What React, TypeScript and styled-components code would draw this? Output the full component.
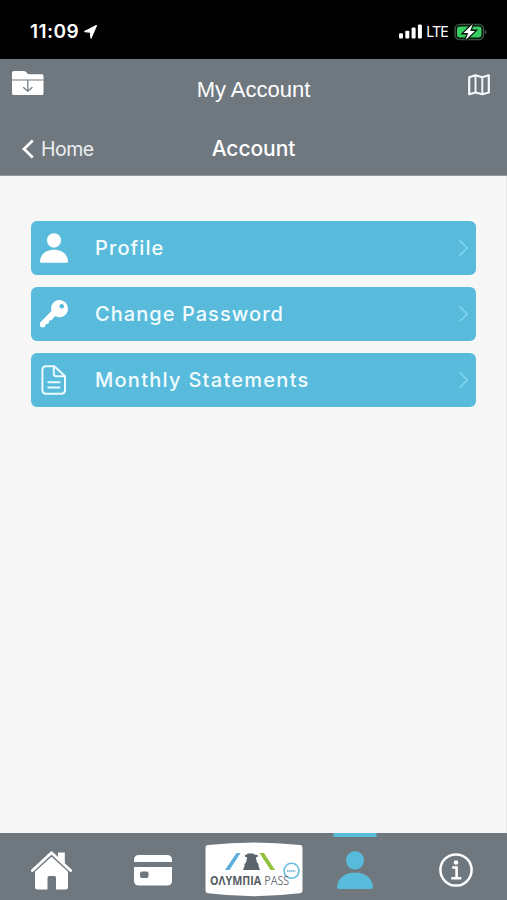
import React from 'react';
import styled, { createGlobalStyle } from 'styled-components';

const Global = createGlobalStyle`
  * { box-sizing: border-box; }
  body { margin: 0; background: #f7f7f7; }
  svg { display: block; flex: none; }
  button { border: 0; background: none; padding: 0; font: inherit; color: inherit; }
`;

const Screen = styled.div`
  width: 507px;
  height: 900px;
  display: flex;
  flex-direction: column;
  overflow: hidden;
  background: #f7f7f7;
  color: #fff;
  font-family: Inter, 'Liberation Sans', sans-serif;
`;

const StatusBar = styled.div`
  height: 59px;
  flex: none;
  display: flex;
  align-items: center;
  padding: 4px 19px 0 30px;
  background: #000;
`;

const Clock = styled.span`
  font-size: 19px;
  line-height: 24px;
  font-weight: 600;
  letter-spacing: 0.45px;
  margin-right: 5px;
`;

const Network = styled.span`
  font-size: 14.2px;
  line-height: 20px;
  letter-spacing: -0.9px;
  margin: 1px 6px 0 4px;
`;

const Spacer = styled.div`
  flex: 1;
`;

const Header = styled.header`
  height: 117px;
  flex: none;
  background: #70787f;
  border-bottom: 1px solid #91979b;
`;

const Bar = styled.div<{ $height: number; $padding: string }>`
  height: ${(p) => p.$height}px;
  padding: ${(p) => p.$padding};
  display: grid;
  grid-template-columns: 1fr auto 1fr;
  align-items: start;
`;

const AppTitle = styled.div`
  font-family: 'Liberation Sans', Arial, sans-serif;
  font-size: 22px;
  line-height: 28px;
  padding: 5px 0 0 5px;
`;

const PageTitle = styled.div`
  font-size: 21px;
  line-height: 28px;
  font-weight: 500;
  letter-spacing: -0.05px;
`;

const BackButton = styled.button`
  justify-self: start;
  display: flex;
  align-items: center;
  gap: 7px;
  font-size: 19.5px;
  line-height: 28px;
  color: #eceff1;
  letter-spacing: -0.5px;
`;

const MapButton = styled.button`
  justify-self: end;
  padding-top: 3px;
`;

const Menu = styled.main`
  flex: 1;
  display: flex;
  flex-direction: column;
  gap: 12px;
  padding: 45px 30px 0 31px;
  border-right: 1px solid #e9e9ea;
`;

const MenuItem = styled.button`
  height: 54px;
  flex: none;
  display: flex;
  align-items: center;
  padding: 0 7px 0 8px;
  border-radius: 6px;
  background: #59bbdb;
  text-align: left;
`;

const MenuIcon = styled.span`
  width: 30px;
  margin-right: 26px;
  display: flex;
  justify-content: center;
`;

const MenuLabel = styled.span<{ $spacing: number }>`
  flex: 1;
  font-size: 20px;
  line-height: 28px;
  font-weight: 500;
  letter-spacing: ${(p) => p.$spacing}px;
  color: #f2fcff;
`;

const TabBar = styled.nav`
  height: 67px;
  flex: none;
  display: grid;
  grid-template-columns: repeat(5, 1fr);
  background: #70787f;
`;

const Tab = styled.button<{ $active?: boolean }>`
  display: flex;
  justify-content: center;
  align-items: flex-start;
  position: relative;
  color: ${(p) => (p.$active ? '#59bbdb' : '#fff')};

  &::before {
    content: '';
    display: ${(p) => (p.$active ? 'block' : 'none')};
    position: absolute;
    top: 0;
    left: 50%;
    width: 43px;
    height: 4px;
    transform: translateX(-50%);
    background: #59bbdb;
  }
`;

const TabIcon = styled.span<{ $top: number; $left?: number }>`
  margin-top: ${(p) => p.$top}px;
  padding-left: ${(p) => p.$left ?? 0}px;
`;

const PersonIcon = ({ width, height }: { width: number; height: number }) => (
  <svg width={width} height={height} viewBox="0 0 36 38" fill="currentColor">
    <ellipse cx="18" cy="9.3" rx="9" ry="9.3" />
    <path d="M0 36.2C.5 27 8 21.4 18 21.4S35.500 27 36 36.200Q36 38 34.200 38H1.800Q0 38 0 36.200Z" />
  </svg>
);

const KeyIcon = () => (
  <svg width="28" height="28" viewBox="0 0 28 28">
    <path
      fill="#fff"
      fillRule="evenodd"
      d="M19.500 0A8.400 8.400 0 0 0 11.500 11L.6 21.900Q0 22.500 0 23.300V25.200Q0 27.500 2.300 27.500C4 27.500 5.400 26.800 5.500 25.600C5.600 24.300 6 24.100 7.200 24C8.500 23.900 8.900 23.400 9 22.100C9.100 20.900 9.500 20.400 10.800 20.300C12.200 20.200 12.500 19.600 12.700 18.500L15.500 15.900A8.200 8.200 0 0 0 27.900 8.500A8.300 8.300 0 0 0 19.500 0ZM21.700 4A2.300 2.300 0 1 1 21.690 4Z"
    />
  </svg>
);

const DocumentIcon = () => (
  <svg width="26" height="30" viewBox="0 0 26 30" fill="none" stroke="#ecfbff" strokeWidth="2" strokeLinecap="round" strokeLinejoin="round">
    <path d="M5 1.200H12.500Q13.500 1.200 14.200 1.900L23.300 10.500Q24 11.200 24 12.200V25Q24 28.700 20.200 28.700H5Q1.400 28.700 1.400 25V5Q1.400 1.200 5 1.200Z" />
    <path d="M12.800 1.500V8.800Q12.800 11.300 15.300 11.300H23.500M7.300 17.300H18.500M7.300 22.500H18.500" />
  </svg>
);

const ChevronIcon = () => (
  <svg width="11" height="18" viewBox="0 0 11 18" fill="none" stroke="#82d6ef" strokeWidth="1.600">
    <path d="M1.500 1.500L9.300 9L1.500 16.500" />
  </svg>
);

const items = [
  { label: 'Profile', icon: <PersonIcon width={28} height={30} />, spacing: 1.1 },
  { label: 'Change Password', icon: <KeyIcon />, spacing: 1.05 },
  { label: 'Monthly Statements', icon: <DocumentIcon />, spacing: 1.27 },
];

const LocationIcon = () => (
  <svg width="13" height="14" viewBox="0 0 13 14">
    <path d="M12.300.7L.8 6.500L6.500 7L7 13Z" fill="#fff" stroke="#fff" strokeWidth="1.300" strokeLinejoin="round" />
  </svg>
);

const SignalIcon = () => (
  <svg width="23" height="15" viewBox="0 0 23 15" fill="#fff">
    <rect x="0" y="9.300" width="4" height="5.200" rx="1.100" />
    <rect x="6.300" y="6.700" width="4" height="7.800" rx="1.100" />
    <rect x="12.600" y="3.600" width="4" height="10.900" rx="1.100" />
    <rect x="18.900" y="0.500" width="4" height="14" rx="1.100" />
  </svg>
);

const BatteryIcon = () => (
  <svg width="34" height="18" viewBox="0 0 34 18">
    <rect x="1" y="1.500" width="28.500" height="15" rx="4.500" fill="#050805" stroke="#38533f" strokeWidth="1.500" />
    <rect x="3" y="3.500" width="24.500" height="11" rx="2.400" fill="#38cf62" />
    <path d="M31 6.500Q33.600 9 31 11.500Z" fill="#555a56" />
    <path d="M18.800 1L9.500 10.100H14.200L11.500 17L21 7.900H16.200Z" fill="#fff" stroke="#07140a" strokeWidth="2.600" paintOrder="stroke" />
  </svg>
);

const FolderIcon = () => (
  <svg width="32" height="25" viewBox="0 0 32 25">
    <path d="M2 0H12Q13 0 13.800.8L15.200 2.300Q16 3.200 17 3.200H30Q31.500 3.200 31.500 5V22.500Q31.500 24 30 24H1.700Q0 24 0 22.300V2Q0 0 2 0Z" fill="#fff" />
    <path d="M0 9H31.500M15.800 9V20M11.200 16.200L15.800 20.200L20.400 16.200" fill="none" stroke="#70787f" strokeWidth="1.200" />
  </svg>
);

const MapIcon = () => (
  <svg width="22" height="22" viewBox="0 0 22 22" fill="none" stroke="#f5f9fb" strokeWidth="2.200" strokeLinejoin="round">
    <path d="M1.200 3.300L7.500 1.300L14.300 3.300L20.800 1.300V18.500L14.300 20.300L7.500 18.500L1.200 20.300Z" />
    <path d="M7.500 1.300V18.500M14.300 3.300V20.300" strokeWidth="1.900" />
  </svg>
);

const BackIcon = () => (
  <svg width="12" height="20" viewBox="0 0 12 20" fill="none" stroke="#fff" strokeWidth="2.700">
    <path d="M10.700 1.500L2 10L10.700 18.500" />
  </svg>
);

const HomeIcon = () => (
  <svg width="41" height="39" viewBox="0 0 41 39" fill="#fff">
    <path d="M27 1.500H33.800V14L27 8Z" />
    <path d="M4 19.500L20.500 5.200L37 19.500V36Q37 38.500 34.500 38.500H25V26.500Q25 25 23.500 25H18Q16.500 25 16.500 26.500V38.500H6.500Q4 38.500 4 36Z" />
    <path d="M1 20.800L20.500 3L40 20.800" fill="none" stroke="#70787f" strokeWidth="3.800" />
    <path d="M1.400 19.500L20.500 1.700L39.600 19.500" fill="none" stroke="#fff" strokeWidth="2.800" strokeLinejoin="round" strokeLinecap="round" />
  </svg>
);

const CardIcon = () => (
  <svg width="38" height="31" viewBox="0 0 38 31">
    <path d="M0 7V5Q0 0 5 0H33Q38 0 38 5V7Z" fill="#fff" />
    <path d="M0 12H38V25.500Q38 30.500 33 30.500H5Q0 30.500 0 25.500Z" fill="#fff" />
    <rect x="6" y="16.500" width="8.500" height="6.500" rx="2" fill="#70787f" />
  </svg>
);

const LogoIcon = () => (
  <svg width="98" height="55" viewBox="0 0 98 55">
    <path d="M3 3Q49-2 95 3Q97.500 3.200 97.500 6V48Q97.500 51 95 51.300Q49 57 3 51.300Q.5 51 .5 48V6Q.5 3.200 3 3Z" fill="#fff" />
    <path d="M31.500 11H35.500L24.500 28H20Z" fill="#5caeda" />
    <path d="M54.500 11H59L70 28H65.500Z" fill="#91c23d" />
    <path d="M42.500 11.500H48.500L49.500 12.700H52.500L53 14.500L50.800 15.500L52 20.500L53.500 22L53.500 24L55 28H38L39.500 24V22L41 20.500L42.200 15.500L39.700 14.500L40.200 12.700H41.800Z" fill="#5b636b" />
    <circle cx="86.500" cy="28.800" r="7.500" fill="#fff" stroke="#6dbdde" strokeWidth="1.600" />
    <path d="M82 28.900H90.500" stroke="#8fc4e1" strokeWidth="2" strokeDasharray="1.500 .4" />
    <g transform="translate(5 42.600) scale(.88 1)" fontFamily="Open Sans, sans-serif" fontSize="12.200">
      <text x="0" y="0" fontWeight="700" fill="#555c63">ΟΛΥΜΠΙΑ</text>
      <text x="90" y="0" textAnchor="end" fill="#6c7379">PASS</text>
    </g>
  </svg>
);

const InfoIcon = () => (
  <svg width="34" height="34" viewBox="0 0 34 34" fill="none" stroke="#fff">
    <circle cx="17" cy="17" r="15.600" strokeWidth="2.500" />
    <circle cx="17" cy="9.500" r="2.300" fill="#fff" stroke="none" />
    <path d="M13.200 14.500H17.600V25.200M12.300 25.200H22.300" strokeWidth="2.600" />
  </svg>
);

export default function App() {
  return (
    <>
      <Global />
      <Screen>
        <StatusBar>
          <Clock>11:09</Clock>
          <LocationIcon />
          <Spacer />
          <SignalIcon />
          <Network>LTE</Network>
          <BatteryIcon />
        </StatusBar>
        <Header>
          <Bar $height={75} $padding="12px 17px 0 12px">
            <FolderIcon />
            <AppTitle>My Account</AppTitle>
            <MapButton><MapIcon /></MapButton>
          </Bar>
          <Bar $height={41} $padding="1px 22px 0">
            <BackButton><BackIcon />Home</BackButton>
            <PageTitle>Account</PageTitle>
          </Bar>
        </Header>
        <Menu>
          {items.map((item) => (
            <MenuItem key={item.label}>
              <MenuIcon>{item.icon}</MenuIcon>
              <MenuLabel $spacing={item.spacing}>{item.label}</MenuLabel>
              <ChevronIcon />
            </MenuItem>
          ))}
        </Menu>
        <TabBar>
          <Tab><TabIcon $top={18} $left={2}><HomeIcon /></TabIcon></Tab>
          <Tab><TabIcon $top={22} $left={2}><CardIcon /></TabIcon></Tab>
          <Tab><TabIcon $top={9} $left={2}><LogoIcon /></TabIcon></Tab>
          <Tab $active><TabIcon $top={18}><PersonIcon width={36} height={38} /></TabIcon></Tab>
          <Tab><TabIcon $top={20}><InfoIcon /></TabIcon></Tab>
        </TabBar>
      </Screen>
    </>
  );
}
